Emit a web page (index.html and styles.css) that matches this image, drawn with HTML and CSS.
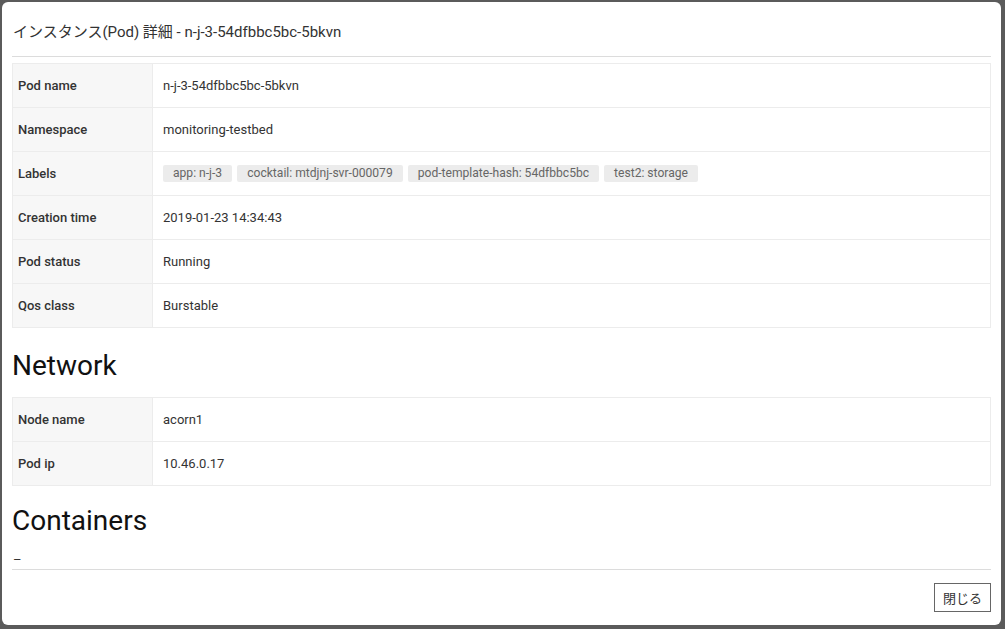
FILE: index.html
```html
<!DOCTYPE html>
<html lang="ja">
<head>
<meta charset="utf-8">
<title>Pod 詳細</title>
<link rel="stylesheet" href="styles.css">
</head>
<body>
<div class="modal">
  <div class="modal-header">
    <h4 class="modal-title">インスタンス(Pod) 詳細 - n-j-3-54dfbbc5bc-5bkvn</h4>
  </div>
  <div class="modal-body">
    <table class="detail">
      <tr><th>Pod name</th><td>n-j-3-54dfbbc5bc-5bkvn</td></tr>
      <tr><th>Namespace</th><td>monitoring-testbed</td></tr>
      <tr><th>Labels</th><td><div class="chips"><span class="chip">app: n-j-3</span><span class="chip">cocktail: mtdjnj-svr-000079</span><span class="chip">pod-template-hash: 54dfbbc5bc</span><span class="chip">test2: storage</span></div></td></tr>
      <tr><th>Creation time</th><td>2019-01-23 14:34:43</td></tr>
      <tr><th>Pod status</th><td>Running</td></tr>
      <tr><th>Qos class</th><td>Burstable</td></tr>
    </table>
    <h2 class="section">Network</h2>
    <table class="detail">
      <tr><th>Node name</th><td>acorn1</td></tr>
      <tr><th>Pod ip</th><td>10.46.0.17</td></tr>
    </table>
    <h2 class="section section-next">Containers</h2>
    <div class="containers">–</div>
  </div>
  <div class="modal-footer">
    <button class="btn">閉じる</button>
  </div>
</div>
</body>
</html>
```
FILE: styles.css
```css
html, body {
  margin: 0;
  padding: 0;
}
body {
  background: #5b5b5b;
  font-family: Roboto, "Noto Sans CJK JP", sans-serif;
  color: #333;
  width: 1005px;
  height: 629px;
  overflow: hidden;
}
.modal {
  box-sizing: border-box;
  margin: 2px;
  width: 999px;
  height: 623px;
  background: #fff;
  border-radius: 6px;
  display: flex;
  flex-direction: column;
  overflow: hidden;
}
.modal-header {
  margin: 0 10px;
  height: 55px;
  border-bottom: 1px solid #dcdcdc;
  display: flex;
  align-items: center;
  padding-top: 3px;
  box-sizing: border-box;
  flex-shrink: 0;
}
.modal-title {
  margin: 0 0 0 1px;
  font-size: 15px;
  font-weight: 400;
  color: #333;
}
.modal-body {
  flex: 1;
  overflow: hidden;
  padding: 6px 10px 0 10px;
}
.detail {
  width: 979px;
  border-collapse: collapse;
  font-size: 13px;
}
.detail th,
.detail td {
  height: 43px;
  border: 1px solid #ececec;
  padding: 0;
  vertical-align: middle;
  text-align: left;
}
.detail th {
  width: 134px;
  padding-left: 5px;
  background: #f7f7f7;
  font-weight: 500;
  font-size: 13px;
  color: #333;
}
.detail td {
  padding-left: 10px;
  color: #333;
}
.chips {
  display: flex;
  gap: 5px;
}
.chip {
  background: #ececec;
  color: #666;
  font-size: 12.1px;
  line-height: 17px;
  padding: 0 10px;
  border-radius: 2px;
}
.section {
  margin: 22px 0 16px 0;
  font-size: 28px;
  font-weight: 400;
  line-height: 31px;
  color: #111;
}
.section-next {
  margin-top: 19px;
}
.containers {
  margin-top: 10px;
  font-size: 13px;
  line-height: 16px;
  color: #333;
  padding-left: 1px;
}
.modal-footer {
  margin: 0 10px;
  height: 56px;
  border-top: 1px solid #dcdcdc;
  display: flex;
  justify-content: flex-end;
  align-items: center;
  flex-shrink: 0;
  box-sizing: border-box;
}
.btn {
  height: 29px;
  width: 57px;
  background: #fff;
  border: 1px solid #666;
  border-radius: 0;
  font-family: Roboto, "Noto Sans CJK JP", sans-serif;
  font-size: 13px;
  color: #333;
  padding: 0;
  margin-right: 0;
}
```
